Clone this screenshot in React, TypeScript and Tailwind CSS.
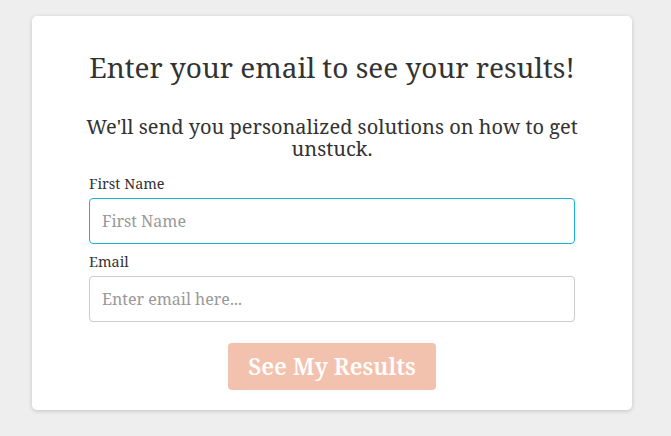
import React from "react";

const serif = { fontFamily: '"Noto Serif", "Droid Serif", "DejaVu Serif", serif' };

export default function App() {
    return (
        <div className="min-h-screen bg-[#eeeeee] pt-4 pl-8" style={serif}>
            <div className="w-[600px] h-[394px] bg-white rounded-[5px] shadow-[0_1px_4px_rgba(0,0,0,0.18)] px-[57px] pt-[32px]">
                <h1 className="text-center text-[28px] leading-[38px] text-[#333333]">
                    Enter your email to see your results!
                </h1>

                <p className="mt-[30px] -mx-3 text-center text-[20px] leading-[22px] text-[#333333]">
                    We'll send you personalized solutions on how to get unstuck.
                </p>

                <form className="mt-[14px]" onSubmit={(e) => e.preventDefault()}>
                    <label className="block text-[14.4px] leading-[20px] text-[#333333]">First Name</label>
                    <input
                        autoFocus
                        type="text"
                        placeholder="First Name"
                        className="mt-[4px] block w-full h-[46px] rounded-[4px] border border-[#17b4d6] px-3 text-[16px] text-[#333333] placeholder:text-[#999999] outline-none"
                        style={serif}
                    />

                    <label className="mt-[8px] block text-[14.4px] leading-[20px] text-[#333333]">Email</label>
                    <input
                        type="email"
                        placeholder="Enter email here..."
                        className="mt-[4px] block w-full h-[46px] rounded-[4px] border border-[#cccccc] px-3 text-[16px] text-[#333333] placeholder:text-[#999999] outline-none"
                        style={serif}
                    />

                    <div className="mt-[21px] flex justify-center">
                        <button
                            type="submit"
                            className="w-[208px] h-[47px] rounded-[4px] bg-[#f3c2ae] text-white text-[23px] font-semibold"
                            style={serif}
                        >
                            See My Results
                        </button>
                    </div>
                </form>
            </div>
        </div>
    );
}
